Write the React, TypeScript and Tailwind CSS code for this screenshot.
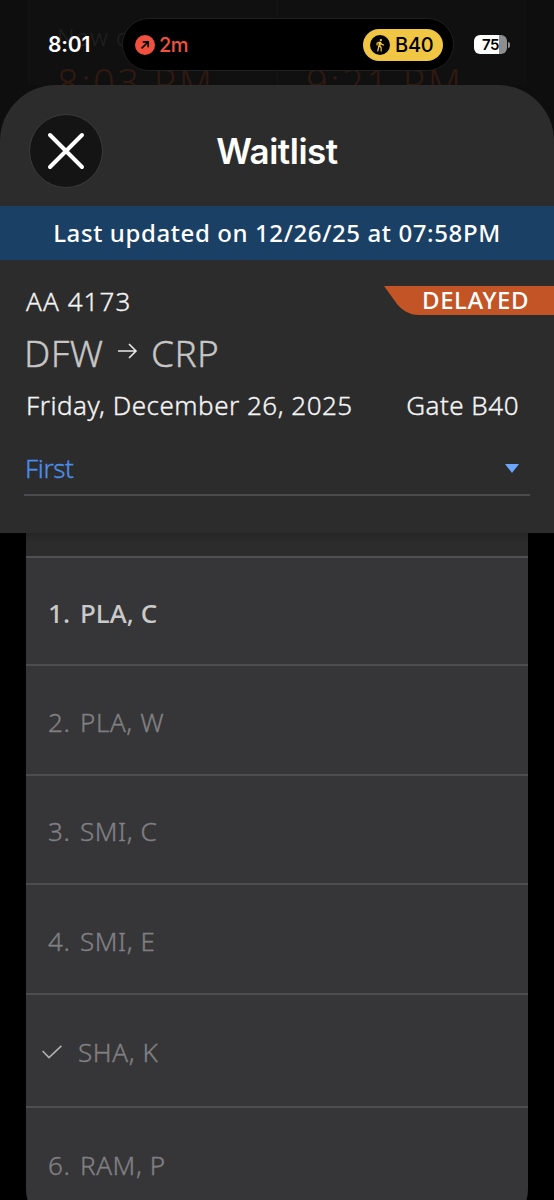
import clsx from "clsx";
import { MdDirectionsWalk } from "react-icons/md";

const passengers = [
  { position: 1, name: "PLA, C", height: "h-[108px]", active: true },
  { position: 2, name: "PLA, W", height: "h-[110px]" },
  { position: 3, name: "SMI, C", height: "h-[109px]" },
  { position: 4, name: "SMI, E", height: "h-[110px]" },
  { position: 5, name: "SHA, K", height: "h-[113px]", cleared: true },
  { position: 6, name: "RAM, P", height: "h-[110px]" },
];

function StatusBar() {
  return (
    <div className="relative flex h-[85px] shrink-0 overflow-hidden bg-[#0e0e0e] pl-[28px] pr-[28px]">
      {/* Flight card dimmed behind the sheet */}
      <div className="flex w-full border-x border-[#121212] bg-[#101010] font-['Noto_Sans'] font-light">
        <div className="w-[249px] shrink-0 border-r border-[#141414] pl-[28px] pt-[19px]">
          <p className="text-[24px] leading-[36px] tracking-[1px] text-[#202020]">Now d</p>
          <p className="mt-[4px] whitespace-nowrap text-[38px] leading-[46px] tracking-[2.5px] text-[#301a10]">8:03 PM</p>
        </div>
        <div className="pl-[28px] pt-[59px]">
          <p className="whitespace-nowrap text-[38px] leading-[46px] tracking-[2.5px] text-[#301a10]">9:21 PM</p>
        </div>
      </div>

      <div className="absolute inset-0 flex font-['Inter']">
        <span className="ml-[48px] mt-[32px] w-[74px] text-[21px] font-semibold leading-[26px] tracking-[-0.2px] text-white">
          8:01
        </span>
        <div className="mt-[18px] flex h-[53px] w-[332px] items-center justify-between rounded-full border border-[#202022] bg-black pl-[12px] pr-[10px]">
          <div className="flex items-center gap-[4px] text-[#f0513f]">
            <svg width="20" height="20" viewBox="0 0 20 20">
              <circle cx="10" cy="10" r="10" fill="#f0513f" />
              <path d="M6.6 13.4 13 7M7.8 6.8h5.4v5.4" fill="none" stroke="#000" strokeWidth="1.7" />
            </svg>
            <span className="text-[20px] font-medium leading-[26px] tracking-[-0.5px]">2m</span>
          </div>
          <div className="flex h-[32px] w-[80px] items-center gap-[5px] rounded-full bg-[#f0c644] pl-[7px]">
            <span className="flex size-[20px] items-center justify-center rounded-full bg-black text-[#f0c644]">
              <MdDirectionsWalk size={14} />
            </span>
            <span className="text-[20px] font-medium leading-[26px] tracking-[-0.2px] text-black">B40</span>
          </div>
        </div>
        <div className="ml-[20px] mt-[35px] flex h-[19px] items-center gap-px">
          <div className="flex h-[19px] w-[33px] items-center justify-center rounded-[6px] bg-linear-to-r from-white from-75% to-[#8e8e8e] to-75% text-[15px] font-semibold leading-none tracking-[-0.5px] text-black">
            75
          </div>
          <div className="h-[6px] w-[2px] rounded-r-full bg-[#8e8e8e]" />
        </div>
      </div>
    </div>
  );
}

function SheetHeader() {
  return (
    <div className="relative flex h-[121px] items-center justify-center">
      <button
        aria-label="Close"
        className="absolute left-[29px] top-[29px] flex size-[74px] items-center justify-center rounded-full border border-[#3a3a3a] bg-[#141414]"
      >
        <svg width="38" height="38" viewBox="0 0 38 38" stroke="#fff" strokeWidth="4" strokeLinecap="round">
          <path d="M3 3l32 32M35 3 3 35" />
        </svg>
      </button>
      <h1 className="mt-[10px] font-['Inter'] text-[35px] font-semibold leading-[42px] tracking-[-0.5px] text-white">
        Waitlist
      </h1>
    </div>
  );
}

function FlightSummary() {
  return (
    <div className="h-[273px] pt-[26px] font-light text-[#f4f4f4] [-webkit-text-stroke:0.35px]">
      <div className="flex h-[31px] justify-between">
        <span className="pl-[26px] text-[26px] leading-[31px] tracking-[1.1px]">AA 4173</span>
        <div className="relative h-[29px] w-[170px]">
          <svg className="absolute inset-0" width="170" height="29" viewBox="0 0 170 29" fill="#c35425">
            <path d="M0 0H170V29H35C25 29 18 24 13 18Z" />
          </svg>
          <span className="relative block pl-[38px] text-[24px] font-medium leading-[28px] tracking-[0.6px] text-white [-webkit-text-stroke:0]">
            DELAYED
          </span>
        </div>
      </div>
      <div className="mt-[11px] flex h-[50px] items-center pl-[24px] text-[37px] leading-[50px] tracking-[0.4px] text-[#c6c6c6]">
        <span className="w-[94px]">DFW</span>
        <svg className="mb-[4px]" width="20" height="16" viewBox="0 0 20 16" fill="none" stroke="#e8e8e8" strokeWidth="1.6">
          <path d="M0 8h18M11 1l7 7-7 7" />
        </svg>
        <span className="ml-[13px]">CRP</span>
      </div>
      <div className="mt-[9px] flex justify-between pl-[26px] pr-[35px] text-[26px] leading-[36px] tracking-[0.5px]">
        <span>Friday, December 26, 2025</span>
        <span>Gate B40</span>
      </div>
      <div className="ml-[24px] mr-[24px] mt-[18px] flex h-[55px] items-center justify-between border-b-2 border-[#4b4b4d] pl-[1px] pr-[11px] pt-[2px] text-[26px] tracking-[-0.4px] text-[#4c8eee]">
        <span>First</span>
        <svg width="14" height="9" viewBox="0 0 14 9" fill="#6ba6fb">
          <path d="M0 0h14L7 9z" />
        </svg>
      </div>
    </div>
  );
}

function PassengerList() {
  return (
    <div className="mx-[26px] shrink-0 rounded-b-[40px] bg-[#363638] pb-[11px]">
      <div className="h-[25px] border-b-2 border-[#505054] bg-linear-to-b from-[#252525] to-[#2c2c2c] to-40%" />
      {passengers.map((p) => (
        <div
          key={p.position}
          className={clsx(
            "flex items-center border-b-2 border-[#4d4d4f] pl-[22px] pt-[3px] text-[26px] leading-[36px] last:border-0",
            p.height,
            p.active
              ? "font-medium text-[#cacaca]"
              : "font-light tracking-[0.6px] text-[#808082] [-webkit-text-stroke:0.35px]",
          )}
        >
          {p.cleared ? (
            <>
              <svg className="-ml-[6px] mr-[16px]" width="20" height="14" viewBox="0 0 20 14" fill="none" stroke="#b0b0b0" strokeWidth="1.6">
                <path d="M.6 6 7 12.6 19.4.8" />
              </svg>
              <span>{p.name}</span>
            </>
          ) : (
            <>
              <span className="w-[32px]">{p.position}.</span>
              <span>{p.name}</span>
            </>
          )}
        </div>
      ))}
    </div>
  );
}

export default function App() {
  return (
    <div className="flex h-[1200px] w-[554px] flex-col overflow-hidden bg-black font-['Noto_Sans',sans-serif]">
      <StatusBar />
      <div className="shrink-0 bg-[#0e0e0e]">
        <div className="rounded-t-[56px] bg-[#2c2c2c]">
          <SheetHeader />
          <div className="flex h-[54px] items-center justify-center bg-[#1a4066] text-[24px] font-medium tracking-[0.6px] text-white">
            Last updated on 12/26/25 at 07:58PM
          </div>
          <FlightSummary />
        </div>
      </div>
      <PassengerList />
    </div>
  );
}
